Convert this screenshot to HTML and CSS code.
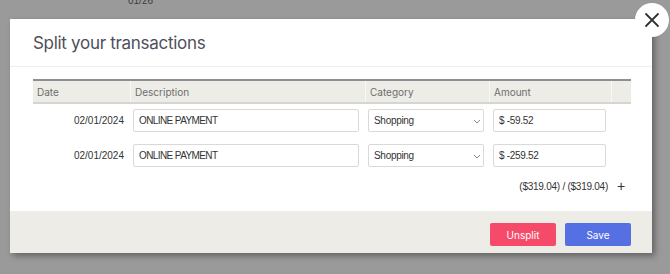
FILE: index.html
```html
<!DOCTYPE html>
<html lang="en">
  <head>
    <meta charset="UTF-8" />
    <title>Split your transactions</title>
    <link rel="stylesheet" href="styles.css">
  </head>
  <body>
    <div class="behind">01/26</div>
    <div class="modal">
      <button class="close" aria-label="Close">
        <svg width="16" height="16" viewBox="0 0 16 16">
          <path d="M2 2 L14 14 M14 2 L2 14" stroke="#333" stroke-width="1.8" stroke-linecap="round" fill="none" />
        </svg>
      </button>
      <div class="modal-header">
        <h1>Split your transactions</h1>
      </div>
      <div class="modal-body">
        <div class="grid head">
          <div>Date</div>
          <div>Description</div>
          <div>Category</div>
          <div>Amount</div>
          <div></div>
        </div>
        <div class="grid row">
          <div class="date">02/01/2024</div>
          <div><input type="text" class="desc" value="ONLINE PAYMENT" /></div>
          <div class="select-wrap">
            <select class="cat">
              <option>Shopping</option>
            </select>
            <svg class="chev" width="8" height="5" viewBox="0 0 8 5"><path d="M1 1 L4 4 L7 1" stroke="#888" stroke-width="1" fill="none" /></svg>
          </div>
          <div><input type="text" class="amt" value="$ -59.52" /></div>
          <div></div>
        </div>
        <div class="grid row">
          <div class="date">02/01/2024</div>
          <div><input type="text" class="desc" value="ONLINE PAYMENT" /></div>
          <div class="select-wrap">
            <select class="cat">
              <option>Shopping</option>
            </select>
            <svg class="chev" width="8" height="5" viewBox="0 0 8 5"><path d="M1 1 L4 4 L7 1" stroke="#888" stroke-width="1" fill="none" /></svg>
          </div>
          <div><input type="text" class="amt" value="$ -259.52" /></div>
          <div></div>
        </div>
        <div class="total">
          <span>($319.04) / ($319.04)</span>
          <span class="plus">+</span>
        </div>
      </div>
      <div class="modal-footer">
        <button class="btn unsplit">Unsplit</button>
        <button class="btn save">Save</button>
      </div>
    </div>
  </body>
</html>
```

FILE: styles.css
```css
body {
  margin: 0;
  padding: 0;
  height: 274px;
  overflow: hidden;
  background-color: #9a9a9a;
  font-family: "Inter", "Liberation Sans", sans-serif;
}

.behind {
  position: absolute;
  top: -5px;
  left: 128px;
  font-family: "Liberation Sans", sans-serif;
  font-size: 10px;
  color: #3c3c3c;
}

.modal {
  position: relative;
  margin: 19px 0 0 10px;
  width: 642px;
  height: 234px;
  background-color: #fff;
  box-shadow: 3px 3px 6px rgba(0, 0, 0, 0.35);
  display: flex;
  flex-direction: column;
}

.close {
  position: absolute;
  top: -16px;
  right: -17px;
  width: 34px;
  height: 34px;
  border: none;
  border-radius: 50%;
  background-color: #fff;
  display: flex;
  align-items: center;
  justify-content: center;
  padding: 0;
}

.modal-header {
  height: 47px;
  display: flex;
  align-items: center;
  padding-left: 23px;
  border-bottom: 1px solid #efefef;
}

h1 {
  margin: 0;
  font-size: 17px;
  font-weight: 400;
  letter-spacing: -0.3px;
  color: #4f4f5a;
}

.modal-body {
  height: 132px;
  padding: 12px 21px 0 23px;
}

.grid {
  display: grid;
  grid-template-columns: 97px 235px 124px 122px 20px;
}

.head {
  background-color: #edece6;
  border-top: 2px solid #8e8e94;
  border-bottom: 2px solid #d6d5cf;
  height: 21px;
  font-size: 10px;
  color: #6e6e6e;
}

.head div {
  display: flex;
  align-items: center;
  padding-left: 4px;
  border-left: 1px solid #f8f8f5;
}

.head div:first-child {
  border-left: none;
}

.row {
  margin-top: 5px;
  height: 30px;
  font-family: "Liberation Sans", sans-serif;
  font-size: 10px;
  color: #333;
}

.row div {
  padding-left: 3px;
}

.date {
  text-align: right;
  padding-right: 6px;
  line-height: 23px;
}

input,
select {
  box-sizing: border-box;
  height: 23px;
  border: 1px solid #d9d9d9;
  border-radius: 2px;
  padding: 0 5px;
  font-family: "Liberation Sans", sans-serif;
  font-size: 10px;
  letter-spacing: -0.3px;
  color: #333;
  background-color: #fff;
  outline: none;
}

.desc {
  width: 226px;
  letter-spacing: -0.6px;
}

.select-wrap {
  position: relative;
}

.cat {
  width: 116px;
  appearance: none;
  -webkit-appearance: none;
}

.chev {
  position: absolute;
  top: 10px;
  left: 108px;
}

.amt {
  width: 113px;
  margin-left: 1px;
}

.total {
  display: flex;
  justify-content: flex-end;
  align-items: center;
  margin-top: 4px;
  font-family: "Liberation Sans", sans-serif;
  font-size: 10px;
  letter-spacing: -0.25px;
  color: #333;
}

.plus {
  width: 20px;
  text-align: center;
  font-size: 14px;
  margin-left: 3px;
}

.modal-footer {
  flex: 1;
  background-color: #edece6;
  display: flex;
  justify-content: flex-end;
  align-items: flex-start;
  gap: 9px;
  padding: 12px 21px 0 0;
}

.btn {
  width: 66px;
  height: 23px;
  border: none;
  border-radius: 2px;
  color: #fff;
  font-family: "Inter", sans-serif;
  font-size: 10px;
  cursor: pointer;
}

.unsplit {
  background-color: #f54a6a;
}

.save {
  background-color: #5470e3;
}
```
